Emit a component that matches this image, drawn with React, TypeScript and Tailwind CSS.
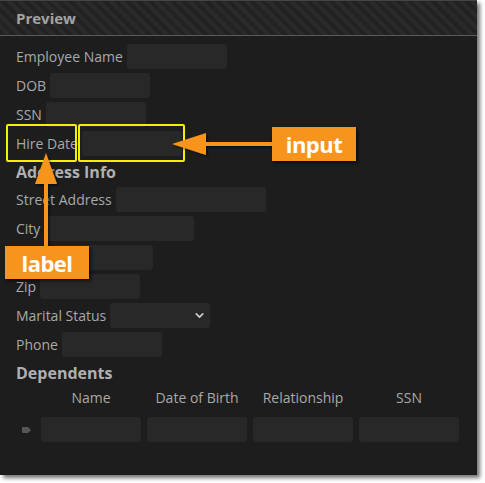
import React from 'react';
import { ChevronDown } from 'lucide-react';

const font = { fontFamily: '"Open Sans", "Liberation Sans", sans-serif' };

function Field({ label, width = 'w-[100px]' }: { label: string; width?: string }) {
  return (
    <div className="flex items-center gap-[4px] h-[25px]">
      <span className="text-[14px] text-[#a9a9a9] leading-none">{label}</span>
      <div className={`${width} h-[25px] rounded-[3px] bg-[#282828]`} />
    </div>
  );
}

function Heading({ children }: { children: React.ReactNode }) {
  return (
    <div className="h-[23px] flex items-center text-[16px] font-bold text-[#b0b0b0] leading-none">
      {children}
    </div>
  );
}

export default function App() {
  const columns = ['Name', 'Date of Birth', 'Relationship', 'SSN'];

  return (
    <div className="w-[485px] h-[483px] bg-white" style={font}>
      <div className="relative w-[477px] h-[475px] bg-[#1d1d1d] border-t border-[#444] shadow-[3px_3px_4px_rgba(0,0,0,0.55)] overflow-visible">
        {/* header */}
        <div className="h-[35px] flex items-center px-[16px] border-b border-[#5a5a5a] bg-[repeating-linear-gradient(45deg,#222222_0px,#222222_4px,#2a2a2a_4px,#2a2a2a_8px)]">
          <span className="text-[15px] font-bold text-[#a3a3a3]">Preview</span>
        </div>

        {/* form */}
        <div className="flex flex-col gap-[4px] px-[16px] pt-[8px]">
          <Field label="Employee Name" />
          <Field label="DOB" />
          <Field label="SSN" />
          <Field label="Hire Date" />
          <Heading>Address Info</Heading>
          <Field label="Street Address" width="w-[150px]" />
          <Field label="City" width="w-[150px]" />
          <Field label="State" />
          <Field label="Zip" />
          <div className="flex items-center gap-[4px] h-[25px]">
            <span className="text-[14px] text-[#a9a9a9] leading-none">Marital Status</span>
            <div className="w-[100px] h-[25px] rounded-[3px] bg-[#282828] flex items-center justify-end pr-[4px]">
              <ChevronDown size={13} strokeWidth={3} className="text-[#d0d0d0]" />
            </div>
          </div>
          <Field label="Phone" />
          <Heading>Dependents</Heading>

          {/* dependents table */}
          <div className="flex flex-col">
            <div className="flex gap-[6px] pl-[25px] h-[20px] items-center">
              {columns.map((c) => (
                <div key={c} className="w-[100px] text-center text-[14px] text-[#a9a9a9] leading-none">
                  {c}
                </div>
              ))}
            </div>
            <div className="flex items-center mt-[9px]">
              <div className="w-[25px] flex items-center pl-[6px]">
                <svg width="9" height="6" viewBox="0 0 9 6">
                  <path d="M0 1 Q0 0 1 0 H6 L9 3 L6 6 H1 Q0 6 0 5 Z" fill="#555" />
                </svg>
              </div>
              <div className="flex gap-[6px]">
                {columns.map((c) => (
                  <div key={c} className="w-[100px] h-[25px] rounded-[3px] bg-[#282828]" />
                ))}
              </div>
            </div>
          </div>
        </div>

        {/* annotations */}
        <div className="absolute left-[6px] top-[123px] w-[71px] h-[38px] border-2 border-[#f2f200] rounded-[2px]" />
        <div className="absolute left-[78px] top-[123px] w-[107px] h-[38px] border-2 border-[#f2f200] rounded-[2px]" />

        <svg className="absolute left-0 top-0 pointer-events-none" width="477" height="475" viewBox="0 0 477 475">
          <defs>
            <filter id="sh" x="-20%" y="-20%" width="140%" height="140%">
              <feDropShadow dx="1.5" dy="1.5" stdDeviation="1" floodColor="#000" floodOpacity="0.6" />
            </filter>
          </defs>
          <g fill="#f7941d" filter="url(#sh)">
            <rect x="203" y="141" width="70" height="4" />
            <path d="M172 143 L206 132 L206 154 Z" />
            <rect x="44" y="180" width="4" height="66" />
            <path d="M46 152 L35 183 L57 183 Z" />
          </g>
        </svg>

        <div className="absolute left-[272px] top-[126px] w-[84px] h-[34px] bg-[#f7941d] shadow-[2px_2px_3px_rgba(0,0,0,0.6)] flex items-center justify-center">
          <span className="text-[22px] font-bold text-white leading-none tracking-[-0.5px]">input</span>
        </div>
        <div className="absolute left-[5px] top-[245px] w-[84px] h-[33px] bg-[#f7941d] shadow-[2px_2px_3px_rgba(0,0,0,0.6)] flex items-center justify-center">
          <span className="text-[22px] font-bold text-white leading-none tracking-[-0.5px]">label</span>
        </div>
      </div>
    </div>
  );
}
